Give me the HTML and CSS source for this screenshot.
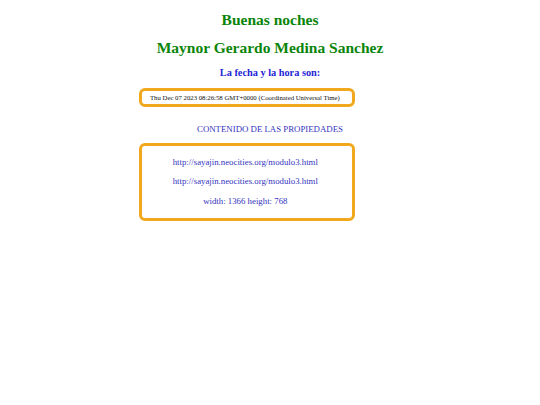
FILE: index.html
```html
<!DOCTYPE html>
<html lang="es">
<head>
<meta charset="utf-8">
<title>Buenas noches</title>
<link rel="stylesheet" href="styles.css">
</head>
<body>
<h1 class="greet">Buenas noches</h1>
<h1 class="name">Maynor Gerardo Medina Sanchez</h1>
<h3 class="label">La fecha y la hora son:</h3>
<div class="box date-box"><span class="date">Thu Dec 07 2023 08:26:58 GMT+0000 (Coordinated Universal Time)</span></div>
<p class="title">CONTENIDO DE LAS PROPIEDADES</p>
<div class="box props">
  <p class="prop">http://sayajin.neocities.org/modulo3.html</p>
  <p class="prop">http://sayajin.neocities.org/modulo3.html</p>
  <p class="prop">width: 1366 height: 768</p>
</div>
</body>
</html>
```
FILE: styles.css
```css
html, body {
  background: #ffffff;
}
body {
  margin: 0 8px;
  padding: 0;
  font-family: "Liberation Serif", "Times New Roman", serif;
}
.greet, .name {
  margin: 0;
  text-align: center;
  color: #0a850a;
  font-size: 15.5px;
  line-height: 18px;
  font-weight: bold;
}
.greet {
  padding-top: 11px;
}
.name {
  margin-top: 10px;
}
.label {
  margin: 10px 0 0;
  text-align: center;
  color: #1f1fd6;
  font-size: 10.3px;
  line-height: 12px;
  font-weight: bold;
}
.box {
  margin-left: 25%;
  width: 40%;
  border: 3px solid #f2a81d;
  border-radius: 6px;
}
.date-box {
  margin-top: 9px;
  height: 13px;
  padding-left: 8px;
  box-sizing: content-box;
  width: calc(40% - 8px);
  display: flex;
  align-items: center;
}
.date {
  font-size: 6.75px;
  line-height: 13px;
  color: #111111;
  white-space: nowrap;
}
.title {
  margin: 16.5px 0 0;
  text-align: center;
  color: #3434c0;
  font-size: 8.8px;
  line-height: 11px;
}
.props {
  margin-top: 8.5px;
  padding: 10.5px 0 11.5px;
  display: flex;
  flex-direction: column;
  gap: 8.5px;
}
.prop {
  margin: 0;
  padding-right: 3px;
  text-align: center;
  color: #3434c0;
  font-size: 8.8px;
  line-height: 11px;
}
```
